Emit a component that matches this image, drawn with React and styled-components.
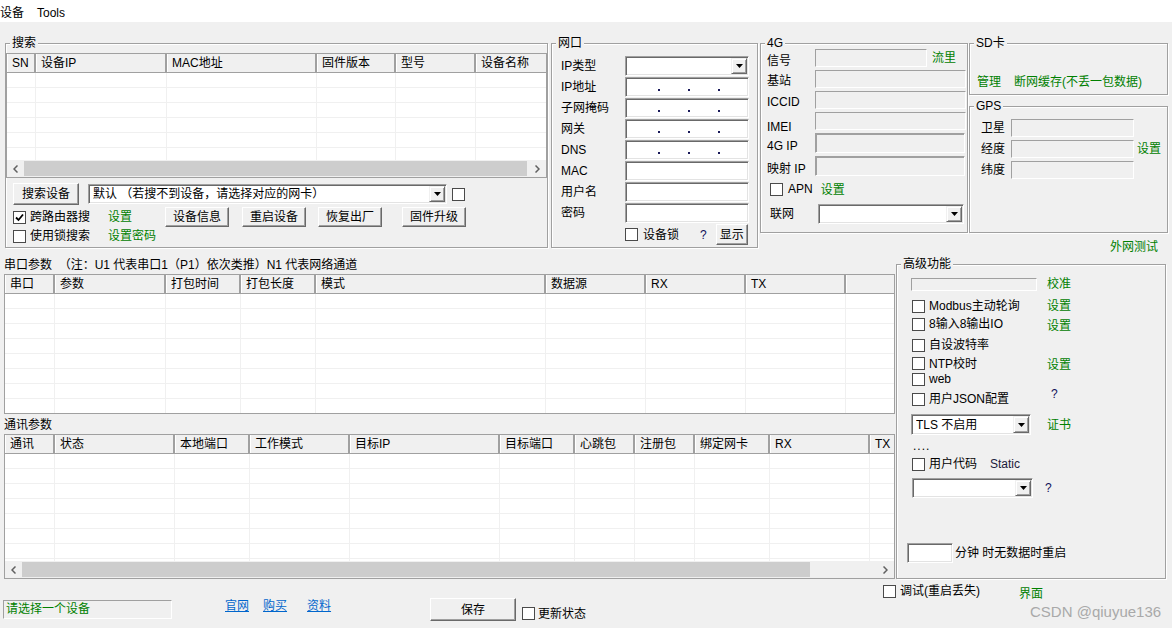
import React from 'react'
import styled, { createGlobalStyle } from 'styled-components'

const GlobalStyle = createGlobalStyle`
  html, body { margin: 0; padding: 0; background: #f0f0f0; }
  body {
    font-family: "Liberation Sans", "Noto Sans CJK SC", sans-serif;
    font-size: 12px;
    color: #000;
  }
  * { box-sizing: border-box; }
`

const Window = styled.div`
  width: 1172px;
  height: 628px;
  overflow: hidden;
  background: #f0f0f0;
  font-family: "Liberation Sans", "Noto Sans CJK SC", sans-serif;
  font-size: 12px;
  line-height: 14px;
`

const MenuBar = styled.div`
  height: 22px;
  padding-top: 3px;
  background: #fff;
  display: flex;
  align-items: center;
  gap: 13px;
`
const MenuItem = styled.span`
  font-size: 12px;
`

/* ---------- common win32 controls ---------- */

const Group = styled.div`
  position: relative;
  flex: none;
  width: ${p => p.w}px;
  height: ${p => p.h}px;
  margin-left: ${p => p.ml || 0}px;
  margin-top: ${p => p.mt || 0}px;
  border: 1px solid #a0a0a0;
  box-shadow: inset 1px 1px #fff, 1px 1px #fff;
`
const Legend = styled.span`
  position: absolute;
  top: -8px;
  left: 4px;
  padding: 0 2px;
  background: #f0f0f0;
  line-height: 14px;
  white-space: nowrap;
`

const Btn = styled.button`
  flex: none;
  width: ${p => p.w}px;
  height: ${p => p.h || 20}px;
  margin: 0;
  margin-left: ${p => p.ml || 0}px;
  margin-top: ${p => p.mt || 0}px;
  padding: 0;
  background: #f0f0f0;
  border: 1px solid;
  border-color: #fff #696969 #696969 #fff;
  box-shadow: inset -1px -1px #a0a0a0;
  font: inherit;
  color: #000;
`

const Sunken = styled.div`
  flex: none;
  width: ${p => p.w}px;
  height: ${p => p.h || 20}px;
  margin-left: ${p => p.ml || 0}px;
  background: #fff;
  border: 1px solid;
  border-color: #a0a0a0 #fff #fff #a0a0a0;
  box-shadow: inset 1px 1px #696969, inset -1px -1px #e3e3e3;
`

const Flat = styled.div`
  flex: none;
  width: ${p => p.w}px;
  height: ${p => p.h || 18}px;
  margin-top: ${p => p.mt || 0}px;
  background: #f0f0f0;
  border: 1px solid;
  border-color: #a0a0a0 #fff #fff #a0a0a0;
  box-shadow: ${p => (p.deep ? 'inset 1px 1px #a0a0a0' : 'none')};
  color: #008000;
  padding-left: 2px;
  line-height: 17px;
  white-space: nowrap;
`

const IpField = styled(Sunken)`
  display: flex;
  align-items: center;
  padding-left: 32px;
  gap: 28px;
`
const IpDot = styled.span`
  width: 2px;
  height: 2px;
  margin-top: 6px;
  background: #1a1a5a;
`

const ComboBox = styled(Sunken)`
  display: flex;
  align-items: center;
  padding: 1px;
  padding-left: 4px;
`
const ComboText = styled.span`
  flex: 1;
  white-space: nowrap;
  overflow: hidden;
`
const DropBtn = styled.span`
  flex: none;
  width: 16px;
  height: 100%;
  display: flex;
  align-items: center;
  justify-content: center;
  background: #f0f0f0;
  border: 1px solid;
  border-color: #f0f0f0 #696969 #696969 #f0f0f0;
  box-shadow: inset 1px 1px #fff, inset -1px -1px #a0a0a0;
`

const Combo = ({ w, h, ml, children }) => (
  <ComboBox w={w} h={h} ml={ml}>
    <ComboText>{children}</ComboText>
    <DropBtn>
      <svg width="7" height="4" viewBox="0 0 7 4">
        <path d="M0 0h7L3.5 4z" fill="#000" />
      </svg>
    </DropBtn>
  </ComboBox>
)

const Box = styled.span`
  flex: none;
  width: 13px;
  height: 13px;
  margin-left: ${p => p.ml || 0}px;
  margin-top: ${p => p.mt || 0}px;
  background: #fff;
  border: 1px solid #4a4a4a;
  display: inline-flex;
  align-items: center;
  justify-content: center;
`
const CheckBox = ({ checked, ml, mt }) => (
  <Box ml={ml} mt={mt}>
    {checked && (
      <svg width="9" height="9" viewBox="0 0 9 9">
        <path d="M1 4.5l2.5 2.5L8 1.5" stroke="#000" strokeWidth="1.8" fill="none" />
      </svg>
    )}
  </Box>
)

const Text = styled.span`
  flex: none;
  white-space: ${p => (p.pre ? 'pre' : 'nowrap')};
  margin-left: ${p => p.ml || 0}px;
  margin-top: ${p => p.mt || 0}px;
  color: ${p => p.color || '#000'};
`
const Green = styled(Text)`
  color: #008000;
`
const Link = styled(Text)`
  color: #0066cc;
  text-decoration: underline;
`
const Help = styled(Text)`
  color: #10105a;
`
/* label in the 4G form: sits a few pixels below its field's centre */
const LowLabel = styled.span`
  white-space: pre;
  padding-top: ${p => p.drop}px;
`

/* ---------- list view ---------- */

const ListFrame = styled.div`
  flex: none;
  width: ${p => p.w}px;
  height: ${p => p.h}px;
  border: 1px solid #a0a0a0;
  background: #fff;
  display: flex;
  flex-direction: column;
  overflow: hidden;
`
const HeadRow = styled.div`
  flex: none;
  display: flex;
  height: 19px;
  background: #f0f0f0;
  border-bottom: 1px solid #a0a0a0;
`
const HeadCell = styled.div`
  flex: none;
  width: ${p => p.w}px;
  padding-left: 4px;
  border-left: 1px solid #fff;
  border-right: 2px solid #a0a0a0;
  line-height: 18px;
  white-space: nowrap;
  overflow: hidden;
`
const ListBody = styled.div`
  flex: 1;
  overflow: hidden;
`
const BodyRow = styled.div`
  display: flex;
  height: 15px;
  border-bottom: 1px solid #f0f0f0;
`
const BodyCell = styled.div`
  flex: none;
  width: ${p => p.w}px;
  border-right: 1px solid #f0f0f0;
`
const ScrollBar = styled.div`
  flex: none;
  display: flex;
  height: 17px;
  background: #f0f0f0;
`
const ScrollArrow = styled.div`
  flex: none;
  width: 17px;
  display: flex;
  align-items: center;
  justify-content: center;
`
const ScrollThumb = styled.div`
  flex: none;
  width: ${p => p.w}px;
  margin: 1px 0;
  background: #cdcdcd;
`
const ScrollTrack = styled.div`
  flex: 1;
`

const Chevron = ({ dir }) => (
  <svg width="5" height="8" viewBox="0 0 5 8">
    <path
      d={dir === 'left' ? 'M4.5 0.5L1 4l3.5 3.5' : 'M0.5 0.5L4 4 0.5 7.5'}
      stroke="#606060"
      strokeWidth="1.5"
      fill="none"
    />
  </svg>
)

function ListView({ w, h, cols, heads, rows = 8, thumb }) {
  return (
    <ListFrame w={w} h={h}>
      <HeadRow>
        {heads.map((t, i) => (
          <HeadCell key={i} w={cols[i]}>{t}</HeadCell>
        ))}
      </HeadRow>
      <ListBody>
        {Array.from({ length: rows }).map((_, r) => (
          <BodyRow key={r}>
            {cols.map((c, i) => (
              <BodyCell key={i} w={c} />
            ))}
          </BodyRow>
        ))}
      </ListBody>
      {thumb && (
        <ScrollBar>
          <ScrollArrow><Chevron dir="left" /></ScrollArrow>
          <ScrollThumb w={thumb} />
          <ScrollTrack />
          <ScrollArrow><Chevron dir="right" /></ScrollArrow>
        </ScrollBar>
      )}
    </ListFrame>
  )
}

/* ---------- layout ---------- */

const TopRow = styled.div`
  display: flex;
  align-items: flex-start;
  margin-top: 21px;
  padding-left: 5px;
`

const SearchBody = styled.div`
  padding-top: 9px;
`
const CtrlRow = styled.div`
  display: flex;
  align-items: center;
  height: ${p => p.h}px;
  margin-top: ${p => p.mt || 0}px;
  padding-left: ${p => (p.pl === undefined ? 7 : p.pl)}px;
`
const Cell = styled.div`
  flex: none;
  display: flex;
  align-items: center;
  width: ${p => p.w}px;
`

const NetBody = styled.div`
  padding: 12px 0 0 9px;
`
const FormGrid = styled.div`
  display: grid;
  grid-template-columns: ${p => p.cols};
  grid-template-rows: ${p => p.rows};
  grid-auto-rows: 20px;
  row-gap: ${p => p.gap}px;
  align-items: center;
`
const FieldWithTag = styled.div`
  display: flex;
  align-items: center;
`

const G4Body = styled.div`
  padding: 5px 0 0 6px;
`

const RightCol = styled.div`
  flex: none;
  width: 199px;
  margin-left: 1px;
  display: flex;
  flex-direction: column;
`
const SdBody = styled.div`
  display: flex;
  padding: 31px 0 0 7px;
`
const GpsBody = styled.div`
  padding: 12px 0 0 11px;
`
const OuterTest = styled(Green)`
  align-self: flex-end;
  margin-right: 10px;
  margin-top: 7px;
`

const MiddleRow = styled.div`
  display: flex;
  align-items: flex-start;
  margin-top: 3px;
`
const LeftCol = styled.div`
  flex: none;
  width: 891px;
  margin-left: 4px;
  display: flex;
  flex-direction: column;
`
const SectionLabel = styled.div`
  height: ${p => p.h}px;
  line-height: ${p => p.lh || p.h}px;
  white-space: pre;
`

const AdvBody = styled.div`
  display: flex;
  flex-direction: column;
  padding: 11px 0 0 14px;
`
const AdvRow = styled.div`
  display: flex;
  align-items: center;
  height: ${p => p.h || 16}px;
  margin-top: ${p => p.mt || 0}px;
`
const AdvLeft = styled.div`
  flex: none;
  width: 136px;
  display: flex;
  align-items: center;
`
const Dots = styled.span`
  margin-left: 2px;
  letter-spacing: 1px;
  line-height: 10px;
`

const BottomRow = styled.div`
  display: flex;
  align-items: flex-start;
`
const StatusArea = styled.div`
  flex: none;
  width: 882px;
  padding-left: 3px;
  display: flex;
  align-items: flex-start;
`
const DebugRow = styled.div`
  flex: none;
  width: 137px;
  display: flex;
  align-items: center;
  margin-top: 5px;
`
const CornerCol = styled.div`
  display: flex;
  flex-direction: column;
  margin-top: 8px;
`
const Watermark = styled.span`
  margin: 2px 0 0 11px;
  font-size: 15px;
  line-height: 18px;
  color: #a9a9a9;
  white-space: nowrap;
`

const netLabels = ['IP类型', 'IP地址', '子网掩码', '网关', 'DNS', 'MAC', '用户名', '密码']

const serialCols = [50, 111, 75, 75, 230, 100, 100, 100, 60]
const serialHeads = ['串口', '参数', '打包时间', '打包长度', '模式', '数据源', 'RX', 'TX', '']
const commCols = [50, 120, 75, 100, 150, 75, 60, 60, 75, 100, 100]
const commHeads = ['通讯', '状态', '本地端口', '工作模式', '目标IP', '目标端口', '心跳包', '注册包', '绑定网卡', 'RX', 'TX']

const IpDots = ({ w }) => (
  <IpField w={w}>
    <IpDot /><IpDot /><IpDot />
  </IpField>
)

export default function App() {
  return (
    <Window>
      <GlobalStyle />
      <MenuBar>
        <MenuItem>设备</MenuItem>
        <MenuItem>Tools</MenuItem>
      </MenuBar>

      <TopRow>
        <Group w={543} h={205}>
          <Legend>搜索</Legend>
          <SearchBody>
            <ListView
              w={541}
              h={125}
              cols={[29, 131, 150, 79, 80, 72]}
              heads={['SN', '设备IP', 'MAC地址', '固件版本', '型号', '设备名称']}
              rows={6}
              thumb={503}
            />
            <CtrlRow h={22} mt={5}>
              <Btn w={66} h={22}>搜索设备</Btn>
              <Combo w={359} h={20} ml={9}>默认 （若搜不到设备，请选择对应的网卡）</Combo>
              <CheckBox ml={5} />
            </CtrlRow>
            <CtrlRow h={20} mt={2}>
              <Cell w={95}>
                <CheckBox checked />
                <Text ml={4}>跨路由器搜</Text>
              </Cell>
              <Cell w={57}><Green>设置</Green></Cell>
              <Btn w={64}>设备信息</Btn>
              <Btn w={64} ml={13}>重启设备</Btn>
              <Btn w={64} ml={12}>恢复出厂</Btn>
              <Btn w={64} ml={20}>固件升级</Btn>
            </CtrlRow>
            <CtrlRow h={14} mt={2}>
              <Cell w={95}>
                <CheckBox />
                <Text ml={4}>使用锁搜索</Text>
              </Cell>
              <Green>设置密码</Green>
            </CtrlRow>
          </SearchBody>
        </Group>

        <Group w={207} h={205} ml={3}>
          <Legend>网口</Legend>
          <NetBody>
            <FormGrid cols="64px 124px" gap={1}>
              {netLabels.map((l, i) => (
                <React.Fragment key={l}>
                  <Text>{l}</Text>
                  {i === 0 ? (
                    <Combo w={124} h={20} />
                  ) : i < 5 ? (
                    <IpDots w={124} />
                  ) : (
                    <Sunken w={124} />
                  )}
                </React.Fragment>
              ))}
            </FormGrid>
            <CtrlRow h={21} mt={1} pl={64}>
              <CheckBox />
              <Text ml={5}>设备锁</Text>
              <Help ml={21}>?</Help>
              <Btn w={32} h={21} ml={9}>显示</Btn>
            </CtrlRow>
          </NetBody>
        </Group>

        <Group w={208} h={190} ml={2}>
          <Legend>4G</Legend>
          <G4Body>
            <FormGrid cols="48px 151px" rows="18px 18px 18px 18px 20px 20px" gap={3}>
              <LowLabel drop={6}>信号</LowLabel>
              <FieldWithTag>
                <Flat w={112} />
                <Green ml={5}>流里</Green>
              </FieldWithTag>
              <LowLabel drop={4}>基站</LowLabel>
              <Flat w={151} />
              <LowLabel drop={4}>ICCID</LowLabel>
              <Flat w={151} />
              <LowLabel drop={12}>IMEI</LowLabel>
              <Flat w={151} />
              <LowLabel drop={6}>4G IP</LowLabel>
              <Flat w={150} h={20} deep />
              <LowLabel drop={6}>{'映射 IP'}</LowLabel>
              <Flat w={150} h={20} deep />
            </FormGrid>
            <CtrlRow h={14} mt={6} pl={3}>
              <CheckBox />
              <Text ml={5}>APN</Text>
              <Green ml={8} mt={2}>设置</Green>
            </CtrlRow>
            <CtrlRow h={20} mt={8} pl={3}>
              <Cell w={48}>联网</Cell>
              <Combo w={146} h={20} />
            </CtrlRow>
          </G4Body>
        </Group>

        <RightCol>
          <Group w={199} h={52}>
            <Legend>SD卡</Legend>
            <SdBody>
              <Green>管理</Green>
              <Green ml={13}>断网缓存(不丢一包数据)</Green>
            </SdBody>
          </Group>
          <Group w={199} h={127} mt={11}>
            <Legend>GPS</Legend>
            <GpsBody>
              <FormGrid cols="30px 123px auto" rows="18px 18px 18px" gap={3}>
                <Text>卫星</Text>
                <Flat w={123} />
                <span />
                <Text>经度</Text>
                <Flat w={123} />
                <Green ml={3}>设置</Green>
                <Text>纬度</Text>
                <Flat w={123} />
                <span />
              </FormGrid>
            </GpsBody>
          </Group>
          <OuterTest>外网测试</OuterTest>
        </RightCol>
      </TopRow>

      <MiddleRow>
        <LeftCol>
          <SectionLabel h={17}>{'串口参数  （注：U1 代表串口1（P1）依次类推）N1 代表网络通道'}</SectionLabel>
          <ListView w={891} h={140} cols={serialCols} heads={serialHeads} rows={8} />
          <SectionLabel h={20} lh={22}>通讯参数</SectionLabel>
          <ListView w={891} h={145} cols={commCols} heads={commHeads} rows={8} thumb={788} />
        </LeftCol>

        <Group w={270} h={315} ml={1} mt={7}>
          <Legend>高级功能</Legend>
          <AdvBody>
            <AdvRow>
              <AdvLeft><Flat w={126} h={13} /></AdvLeft>
              <Green>校准</Green>
            </AdvRow>
            <AdvRow mt={6}>
              <AdvLeft><CheckBox ml={1} /><Text ml={4}>Modbus主动轮询</Text></AdvLeft>
              <Green>设置</Green>
            </AdvRow>
            <AdvRow mt={2}>
              <AdvLeft><CheckBox ml={1} /><Text ml={4}>8输入8输出IO</Text></AdvLeft>
              <Green mt={3}>设置</Green>
            </AdvRow>
            <AdvRow mt={5}>
              <AdvLeft><CheckBox ml={1} /><Text ml={4}>自设波特率</Text></AdvLeft>
            </AdvRow>
            <AdvRow h={15} mt={3}>
              <AdvLeft><CheckBox ml={1} /><Text ml={4}>NTP校时</Text></AdvLeft>
              <Green mt={2}>设置</Green>
            </AdvRow>
            <AdvRow>
              <AdvLeft><CheckBox ml={1} /><Text ml={4}>web</Text></AdvLeft>
            </AdvRow>
            <AdvRow mt={4}>
              <AdvLeft><CheckBox ml={1} /><Text ml={4}>用户JSON配置</Text></AdvLeft>
              <Help ml={4} mt={-11}>?</Help>
            </AdvRow>
            <AdvRow h={21} mt={7}>
              <AdvLeft><Combo w={120} h={21}>TLS 不启用</Combo></AdvLeft>
              <Green>证书</Green>
            </AdvRow>
            <AdvRow h={14} mt={4}>
              <Dots>....</Dots>
            </AdvRow>
            <AdvRow mt={3}>
              <AdvLeft>
                <CheckBox ml={1} />
                <Text ml={4}>用户代码</Text>
                <Text ml={13} color="#1a1a3a">Static</Text>
              </AdvLeft>
            </AdvRow>
            <AdvRow h={20} mt={6}>
              <AdvLeft><Combo w={121} h={20} ml={1} /></AdvLeft>
              <Help ml={-2}>?</Help>
            </AdvRow>
            <AdvRow h={20} mt={45}>
              <Sunken w={46} ml={-4} />
              <Text ml={2} pre>{'分钟 时无数据时重启'}</Text>
            </AdvRow>
          </AdvBody>
        </Group>
      </MiddleRow>

      <BottomRow>
        <StatusArea>
          <Flat w={169} h={19} mt={21}>请选择一个设备</Flat>
          <Link ml={53} mt={20}>官网</Link>
          <Link ml={14} mt={20}>购买</Link>
          <Link ml={20} mt={20}>资料</Link>
          <Btn w={86} h={23} ml={99} mt={19}>保存</Btn>
          <CheckBox ml={6} mt={28} />
          <Text ml={3} mt={28}>更新状态</Text>
        </StatusArea>
        <DebugRow>
          <CheckBox ml={1} />
          <Text ml={4}>调试(重启丢失)</Text>
        </DebugRow>
        <CornerCol>
          <Green>界面</Green>
          <Watermark>CSDN @qiuyue136</Watermark>
        </CornerCol>
      </BottomRow>
    </Window>
  )
}
